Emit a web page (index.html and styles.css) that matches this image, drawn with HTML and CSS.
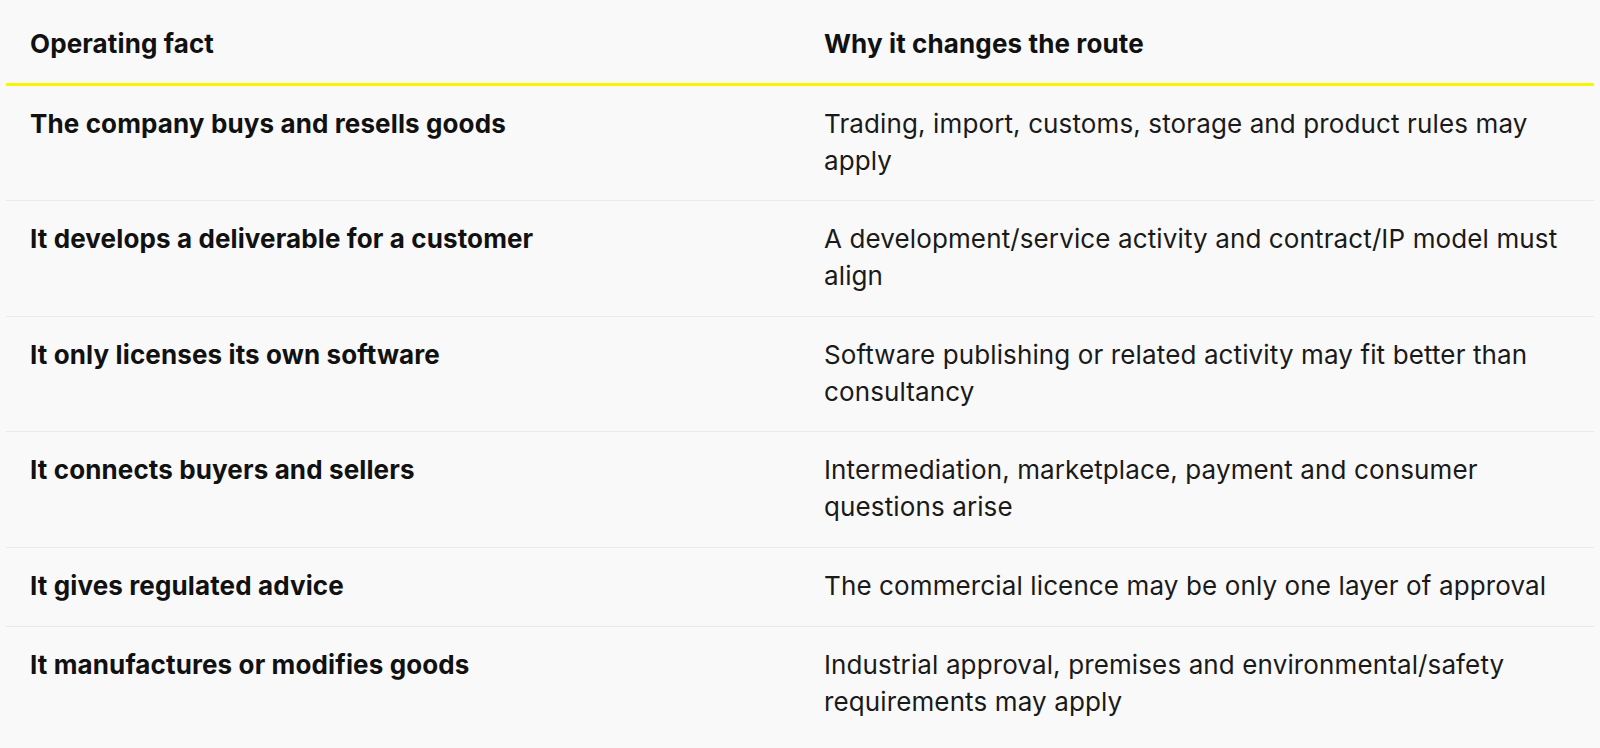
FILE: index.html
```
<!DOCTYPE html>
<html lang="en">
<head>
<meta charset="utf-8">
<title>Operating facts</title>
<link rel="stylesheet" href="styles.css">
</head>
<body>
<main class="page">
  <table class="facts">
    <thead>
      <tr>
        <th>Operating fact</th>
        <th>Why it changes the route</th>
      </tr>
    </thead>
    <tbody>
      <tr>
        <td class="fact">The company buys and resells goods</td>
        <td>Trading, import, customs, storage and product rules may apply</td>
      </tr>
      <tr>
        <td class="fact">It develops a deliverable for a customer</td>
        <td>A development/service activity and contract/IP model must align</td>
      </tr>
      <tr>
        <td class="fact">It only licenses its own software</td>
        <td>Software publishing or related activity may fit better than consultancy</td>
      </tr>
      <tr>
        <td class="fact">It connects buyers and sellers</td>
        <td>Intermediation, marketplace, payment and consumer questions arise</td>
      </tr>
      <tr>
        <td class="fact">It gives regulated advice</td>
        <td>The commercial licence may be only one layer of approval</td>
      </tr>
      <tr>
        <td class="fact">It manufactures or modifies goods</td>
        <td>Industrial approval, premises and environmental/safety requirements may apply</td>
      </tr>
    </tbody>
  </table>
</main>
</body>
</html>
```
FILE: styles.css
```
html, body {
  margin: 0;
  padding: 0;
  background: #f9f9f9;
}

body {
  font-family: "Inter", "Liberation Sans", sans-serif;
  font-size: 26px;
  line-height: 37px;
  color: #141414;
  letter-spacing: 0.12px;
}

.page {
  padding: 6px;
}

.facts {
  width: 100%;
  border-collapse: collapse;
  table-layout: fixed;
}

.facts th,
.facts td {
  width: 50%;
  text-align: left;
  vertical-align: top;
  padding: 19px 24px 21.6px 24px;
}

.facts th {
  font-weight: 700;
  color: #111111;
  padding-bottom: 20.6px;
}

.facts thead tr {
  border-bottom: 3px solid #f8f500;
}

.facts tbody tr {
  border-bottom: 1px solid #e9e9e9;
}

.facts tbody tr:last-child {
  border-bottom: none;
}

.facts td {
  font-weight: 400;
  color: #1a1a1a;
}

.facts td.fact {
  font-weight: 700;
  color: #111111;
}
```
